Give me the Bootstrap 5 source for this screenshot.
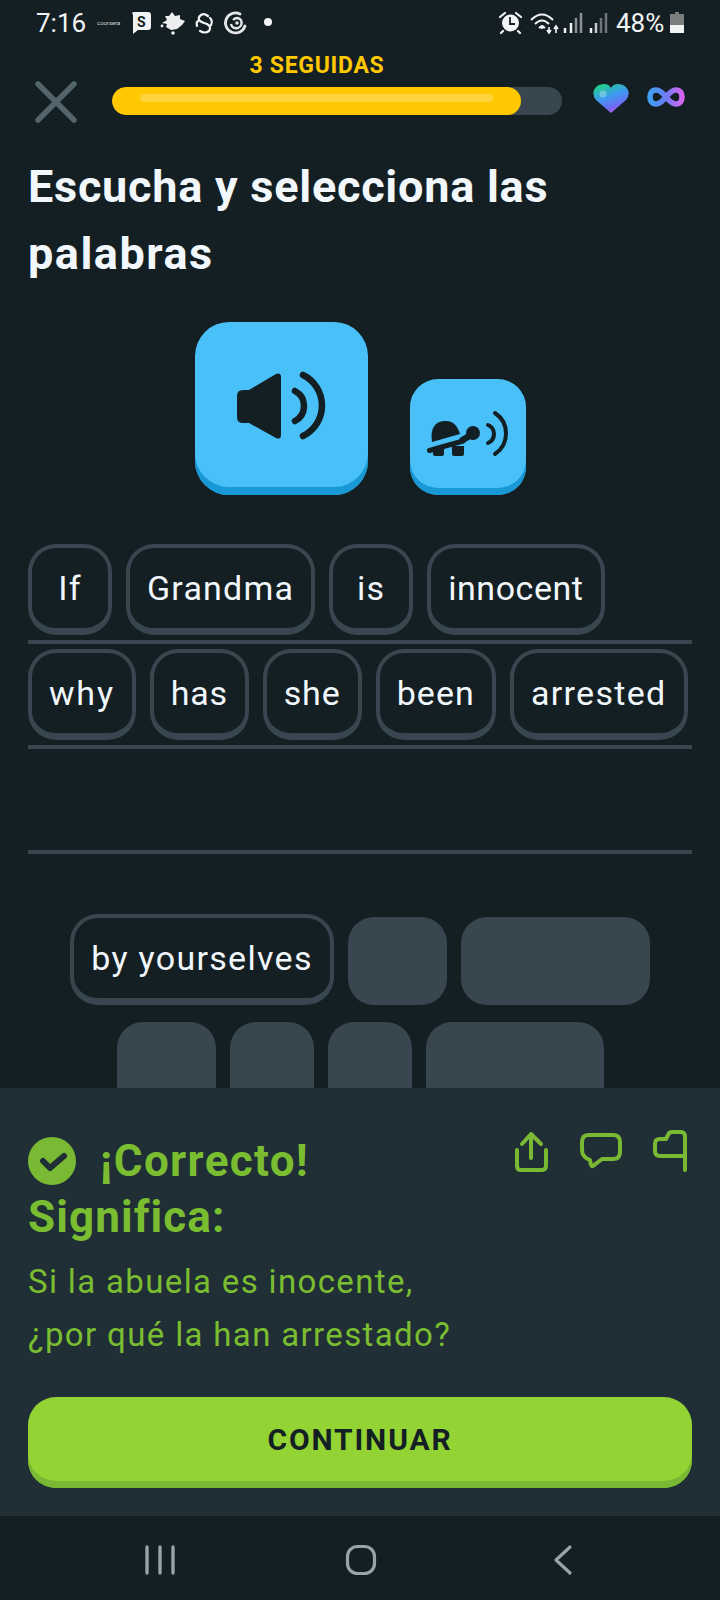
<!DOCTYPE html>
<html lang="es"><head><meta charset="utf-8"><title>Duolingo</title>
<link href="https://cdn.jsdelivr.net/npm/bootstrap@5.3.0/dist/css/bootstrap.min.css" rel="stylesheet">
<style>
html,body{background:#141f24;margin:0}
body{font-family:Roboto,"Liberation Sans",sans-serif;color:#f1f7fb}
.screen{width:720px;height:1600px;overflow:hidden}
.stat{height:46px;padding-left:36px;padding-right:36px;font-size:26px;color:#f1f3f4;line-height:46px}
.stat svg{display:block;flex:none}
.timeval{width:50px;margin-right:9px;white-space:nowrap}
.pct{width:53px;white-space:nowrap;margin-left:8px;margin-right:1px}
.lesson{overflow:hidden;min-height:0;padding:0 28px}
.hdr{height:69px;margin-left:-28px;margin-right:-28px}
.xbtn{width:112px;flex:none;margin-bottom:-11px}
.xbtn svg,.lives svg{display:block}
.barwrap{width:450px;flex:none}
.streak{color:#ffc800;font-weight:700;font-size:23px;line-height:28px;text-align:center;margin:6px 0 7px;padding-right:40px;letter-spacing:.7px}
.pbar{height:28px;border-radius:14px;background:#37464f;overflow:hidden}
.pfill{width:409px;height:28px;border-radius:14px;background:#ffc800;padding:7px 28px 0 28px}
.pshine{height:8px;border-radius:4px;background:#ffd43a}
.lives{padding-left:31px}
.ttl{font-size:45px;font-weight:700;line-height:67px;margin:38px 0 0;color:#f1f7fb;letter-spacing:.75px}
.ttl-wide{letter-spacing:1.5px}
.audios{margin-top:35px;padding-left:167px;gap:42px;height:173px}
.aud{border:0;padding:0;background:#49c0f8;display:block;flex:none}
.aud svg{display:block}
.aud-lg{width:173px;height:173px;border-radius:34px;box-shadow:inset 0 -8px 0 #1899d6}
.aud-sm{width:116px;height:116px;border-radius:28px;box-shadow:inset 0 -7px 0 #1899d6}
.answer{margin-top:49px}
.lineitem{height:100px;border-bottom:4px solid #37464f;gap:14px;padding-bottom:5px;margin-bottom:5px;align-items:flex-start}
.tile{height:91px;min-width:84px;text-align:center;border:4px solid #37464f;border-bottom-width:7px;border-radius:28px;font-size:34px;line-height:80px;padding:0 17px;letter-spacing:1.3px;color:#f1f7fb;background:#141f24;white-space:nowrap;flex:none}
.ls-innocent{letter-spacing:.55px}
.ls-why{letter-spacing:1.8px}
.ls-has{letter-spacing:.7px}
.ls-she{letter-spacing:.9px}
.ls-been{letter-spacing:1.1px}
.ls-grandma{letter-spacing:1.2px}
.ls-by{letter-spacing:1.3px}
.bank{margin-top:60px;gap:17px}
.bankrow{gap:14px;align-items:flex-end}
.blankt{height:88px;border-radius:26px;background:#37464f;flex:none}
.w96{width:99px}.w189{width:189px}.w98{width:99px}.w84{width:84px}.w178{width:178px}
.panel{height:428px;background:#202f36;padding:48px 28px 0;flex:none;color:#7abd31}
.fbhead{height:56px}
.fbtitle{font-size:44px;font-weight:700;line-height:50px;letter-spacing:1.35px;margin:0}
.chk{margin-right:24px;flex:none;display:block}
.acts{flex:none;margin-top:-6px}
.acts svg{display:block}
.signif{font-size:44px;font-weight:700;line-height:50px;letter-spacing:1.1px;margin:0 0 13px}
.trans{font-size:33px;line-height:53px;letter-spacing:1.35px;margin:0}
.go{display:block;width:100%;height:91px;margin-top:36px;border:0;border-radius:28px;background:#93d333;box-shadow:inset 0 -7px 0 #79b933;color:#141f24;font-weight:700;font-size:30px;letter-spacing:1.85px;padding:0 0 7px}
.sysnav{height:84px;flex:none;background:#141f24}
.sysnav svg{display:block}
</style></head>
<body>
<div class="screen d-flex flex-column">
  <div class="stat d-flex align-items-center flex-none">
    <span class="timeval">7:16</span>
    <svg width="182" height="46" viewBox="95 0 182 46">
      <text x="97" y="25" font-size="6" font-family="Roboto" fill="#cfd3d4">coursera</text>
      <path d="M134 12H148Q151 12 151 15V27Q151 30 148 30H138L133 34V15Q131 12 134 12Z" fill="#f1f3f4"/>
      <text x="137" y="27" font-size="14" font-weight="700" font-family="Roboto" fill="#141f24">S</text>
      <path d="M172 12L175 16L180 15L180 19L185 21L182 25L177 29L171 30L166 27L167 24L162 23L167 20L165 16L169 16Z" fill="#eceff0"/>
      <circle cx="162" cy="26" r="1.4" fill="#eceff0"/><circle cx="173" cy="33" r="1.800" fill="#eceff0"/>
      <path d="M208 16Q204 13 201 15Q197 18 200 21Q203 23 207 24Q212 27 209 31Q205 34 200 31M197 26Q196 22 198 21M211 25Q213 21 210 18" fill="none" stroke="#f1f3f4" stroke-width="2.200" stroke-linecap="round"/>
      <path d="M240 14A10 10 0 1 0 245 26" fill="none" stroke="#e4e7e8" stroke-width="2.800" stroke-linecap="round"/>
      <path d="M233 20Q237 16 241 20Q243 26 238 28Q232 29 231 24" fill="none" stroke="#e4e7e8" stroke-width="2.400"/>
      <circle cx="237" cy="23" r="1.800" fill="#e4e7e8"/>
      <circle cx="268" cy="22" r="4" fill="#f1f3f4"/>
    </svg>
    <svg class="ms-auto" width="110" height="46" viewBox="498 0 110 46">
      <circle cx="510.500" cy="23" r="8.500" fill="#f1f3f4"/>
      <path d="M510 17V24H515" fill="none" stroke="#141f24" stroke-width="1.800"/>
      <path d="M500 17L505 13M521 17L516 13M503 31L501 33M518 31L520 33" stroke="#f1f3f4" stroke-width="2.200" stroke-linecap="round"/>
      <path d="M531 20Q542 9 553 20M535 24Q542 17 549 24M539 28Q542 25 545 28" fill="none" stroke="#f1f3f4" stroke-width="2"/>
      <circle cx="542" cy="27" r="2" fill="#f1f3f4"/>
      <path d="M549 27V33M547 30L549 33L551 30M556 33V26M554 29L556 26L558 29" fill="none" stroke="#f1f3f4" stroke-width="1.600"/>
      <path d="M565 28V33" stroke="#f1f3f4" stroke-width="2.500"/><path d="M571 23V33" stroke="#f1f3f4" stroke-width="2.500"/>
      <path d="M576 18V33M581 13V33" stroke="#8a9194" stroke-width="2.500"/>
      <path d="M591 28V33" stroke="#f1f3f4" stroke-width="2.500"/><path d="M596 23V33" stroke="#c8cbcc" stroke-width="2.500"/>
      <path d="M601 18V33M606 13V33" stroke="#6f777a" stroke-width="2.500"/>
    </svg>
    <span class="pct">48%</span>
    <svg width="14" height="46" viewBox="670 0 14 46">
      <path d="M675 12H679V14H684V33H670V14H675Z" fill="#7c7f80"/>
      <path d="M670 25H684V33H670Z" fill="#f1f3f4"/>
    </svg>
  </div>

  <div class="lesson flex-grow-1">
    <div class="hdr d-flex align-items-end">
      <div class="xbtn ps-4">
        <svg width="60" height="50" viewBox="24 76 60 50"><path d="M38 84L74 120M74 84L38 120" stroke="#52656d" stroke-width="5.500" stroke-linecap="round"/></svg>
      </div>
      <div class="barwrap">
        <div class="streak">3 SEGUIDAS</div>
        <div class="pbar"><div class="pfill"><div class="pshine"></div></div></div>
      </div>
      <div class="lives d-flex">
        <svg width="100" height="32" viewBox="593 86 100 32">
          <defs>
            <linearGradient id="hg" x1="0.150" y1="0" x2="0.600" y2="1"><stop offset="0" stop-color="#1fd67a"/><stop offset=".45" stop-color="#3a9cf0"/><stop offset=".8" stop-color="#6f6cf5"/><stop offset="1" stop-color="#b45cf0"/></linearGradient>
            <linearGradient id="ig" x1="0" y1="0" x2="1" y2="0"><stop offset="0" stop-color="#3fa0f2"/><stop offset=".5" stop-color="#6d7df5"/><stop offset="1" stop-color="#d765f0"/></linearGradient>
          </defs>
          <path d="M611 116L596 103Q592 98 594 93Q597 87 604 87Q609 87 611 91Q613 87 618 87Q625 87 628 93Q630 98 626 103Z" fill="url(#hg)"/>
          <circle cx="603" cy="97" r="3.500" fill="#fff" fill-opacity=".3"/>
          <path d="M666 100C662 95 659 93 656 93C652 93 650 96 650 100C650 104 652 107 656 107C659 107 662 105 666 100C670 95 673 93 676 93C680 93 682 96 682 100C682 104 680 107 676 107C673 107 670 105 666 100Z" fill="none" stroke="url(#ig)" stroke-width="5.500"/>
        </svg>
      </div>
    </div>

    <h1 class="ttl">Escucha y selecciona las<br><span class="ttl-wide">palabras</span></h1>

    <div class="audios d-flex align-items-end">
      <button class="aud aud-lg" type="button" aria-label="Escuchar">
        <svg width="173" height="173" viewBox="195 322 173 173">
          <path d="M249 390L276 374Q281 372 281 377V435Q281 440 276 438L249 423H243Q237 423 237 417V396Q237 390 243 390Z" fill="#141f24"/>
          <path d="M295 391A17 17 0 0 1 295 421M303 375A34 34 0 0 1 303 436" fill="none" stroke="#141f24" stroke-width="6.500" stroke-linecap="round"/>
        </svg>
      </button>
      <button class="aud aud-sm" type="button" aria-label="Escuchar despacio">
        <svg width="116" height="116" viewBox="410 379 116 116">
          <path d="M432 442Q429 421 446 421Q456 421 460 434Z" fill="#141f24"/>
          <path d="M429.500 450.500L463 441" fill="none" stroke="#141f24" stroke-width="5" stroke-linecap="round"/>
          <path d="M433 449H444V454Q444 456 442 456H435Q433 456 433 454ZM452 446H464V454Q464 456 462 456H454Q452 456 452 454Z" fill="#141f24"/>
          <path d="M461 441L471 435" stroke="#141f24" stroke-width="6.500"/>
          <circle cx="473" cy="433" r="7" fill="#141f24"/>
          <path d="M488 425A9.750 9.750 0 0 1 488 443M495 413A24.600 24.600 0 0 1 495 454" fill="none" stroke="#141f24" stroke-width="4" stroke-linecap="round"/>
        </svg>
      </button>
    </div>

    <div class="answer">
      <div class="lineitem d-flex"><span class="tile">If</span><span class="tile ls-grandma">Grandma</span><span class="tile">is</span><span class="tile ls-innocent">innocent</span></div>
      <div class="lineitem d-flex"><span class="tile ls-why">why</span><span class="tile ls-has">has</span><span class="tile ls-she">she</span><span class="tile ls-been">been</span><span class="tile">arrested</span></div>
      <div class="lineitem d-flex"></div>
    </div>

    <div class="bank d-flex flex-column align-items-center">
      <div class="bankrow d-flex"><span class="tile ls-by">by yourselves</span><span class="blankt w96"></span><span class="blankt w189"></span></div>
      <div class="bankrow d-flex"><span class="blankt w98"></span><span class="blankt w84"></span><span class="blankt w84"></span><span class="blankt w178"></span></div>
    </div>
  </div>

  <div class="panel">
    <div class="fbhead d-flex align-items-start justify-content-between">
      <div class="d-flex align-items-center">
        <svg class="chk" width="48" height="48" viewBox="28 1136 48 48"><circle cx="52" cy="1160" r="24" fill="#79b933"/><path d="M43 1160L50 1167L64 1155" fill="none" stroke="#202f36" stroke-width="6" stroke-linecap="round" stroke-linejoin="round"/></svg>
        <h2 class="fbtitle">¡Correcto!</h2>
      </div>
      <div class="acts">
        <svg width="180" height="44" viewBox="512 1130 180 44">
          <path d="M517 1150V1166Q517 1170 521 1170H541Q546 1170 546 1166V1150M531 1158V1134M522 1144L531 1134L541 1144" fill="none" stroke="#79b933" stroke-width="4" stroke-linecap="round" stroke-linejoin="round"/>
          <path d="M589 1135H613Q620 1135 620 1142V1152Q620 1159 613 1159H602L593 1166Q591 1167 590 1160Q582 1157 582 1150V1142Q582 1135 589 1135Z" fill="none" stroke="#79b933" stroke-width="4" stroke-linejoin="round"/>
          <path d="M685 1170V1137Q685 1132 681 1132H672Q669 1132 668 1135L666 1139H660Q655 1139 655 1144V1151Q655 1156 660 1156H685" fill="none" stroke="#79b933" stroke-width="4" stroke-linecap="round" stroke-linejoin="round"/>
        </svg>
      </div>
    </div>
    <div class="signif">Significa:</div>
    <p class="trans">Si la abuela es inocente,<br>¿por qué la han arrestado?</p>
    <button class="go" type="button">CONTINUAR</button>
  </div>

  <div class="sysnav">
    <svg width="720" height="84" viewBox="0 1516 720 84">
      <path d="M147 1547V1573M160 1547V1573M173 1547V1573" stroke="#9aa3a7" stroke-width="3.400" stroke-linecap="round"/>
      <rect x="347.500" y="1546.500" width="27" height="27" rx="10" fill="none" stroke="#9aa3a7" stroke-width="3.200"/>
      <path d="M570 1547L556 1560L570 1573" fill="none" stroke="#9aa3a7" stroke-width="3.200" stroke-linecap="round" stroke-linejoin="round"/>
    </svg>
  </div>
</div>
<script src="https://cdn.jsdelivr.net/npm/bootstrap@5.3.0/dist/js/bootstrap.bundle.min.js"></script>
</body></html>
